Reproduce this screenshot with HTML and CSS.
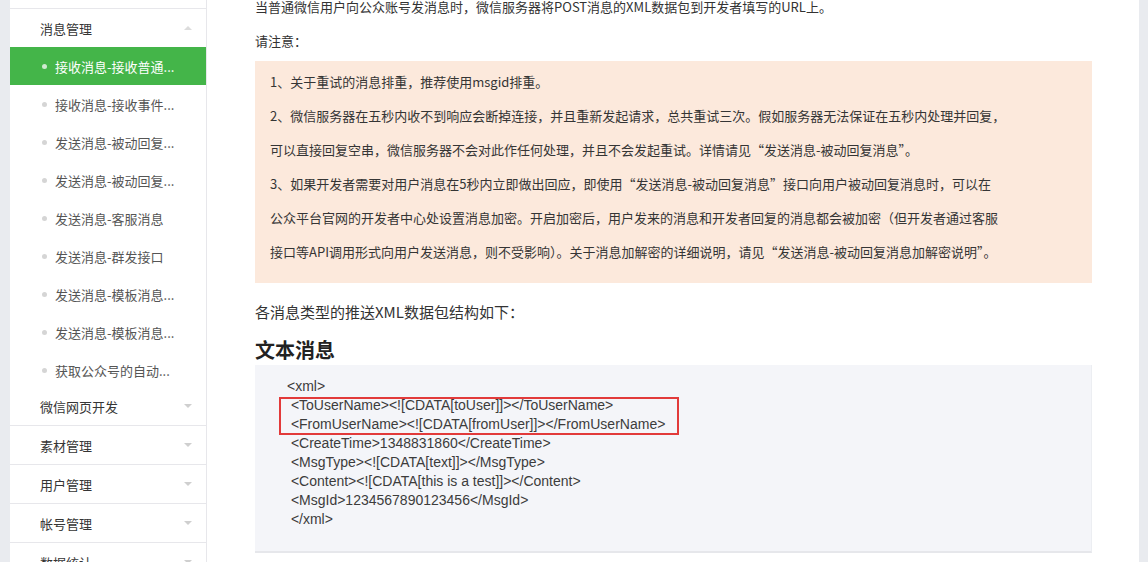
FILE: index.html
```html
<!DOCTYPE html>
<html lang="zh-CN">
<head>
<meta charset="utf-8">
<title>接收普通消息</title>
<link rel="stylesheet" href="styles.css">
</head>
<body>
<div class="page">
  <div class="gutter"></div>
  <nav class="sidebar">
    <div class="sec sec-open">
      <div class="sec-head first"><span>消息管理</span><i class="tri tri-up"></i></div>
      <ul class="sub">
        <li class="item active"><i class="dot"></i><span>接收消息-接收普通...</span></li>
        <li class="item"><i class="dot"></i><span>接收消息-接收事件...</span></li>
        <li class="item"><i class="dot"></i><span>发送消息-被动回复...</span></li>
        <li class="item"><i class="dot"></i><span>发送消息-被动回复...</span></li>
        <li class="item"><i class="dot"></i><span>发送消息-客服消息</span></li>
        <li class="item"><i class="dot"></i><span>发送消息-群发接口</span></li>
        <li class="item"><i class="dot"></i><span>发送消息-模板消息...</span></li>
        <li class="item"><i class="dot"></i><span>发送消息-模板消息...</span></li>
        <li class="item"><i class="dot"></i><span>获取公众号的自动...</span></li>
      </ul>
    </div>
    <div class="sec-head"><span>微信网页开发</span><i class="tri"></i></div>
    <div class="sec-head"><span>素材管理</span><i class="tri"></i></div>
    <div class="sec-head"><span>用户管理</span><i class="tri"></i></div>
    <div class="sec-head"><span>帐号管理</span><i class="tri"></i></div>
    <div class="sec-head"><span>数据统计</span><i class="tri"></i></div>
  </nav>
  <main class="main">
    <p class="intro">当普通微信用户向公众账号发消息时，微信服务器将POST消息的XML数据包到开发者填写的URL上。</p>
    <p class="label">请注意：</p>
    <div class="notice">
      <span class="ln">1、关于重试的消息排重，推荐使用msgid排重。</span>
      <span class="ln">2、微信服务器在五秒内收不到响应会断掉连接，并且重新发起请求，总共重试三次。假如服务器无法保证在五秒内处理并回复，</span>
      <span class="ln">可以直接回复空串，微信服务器不会对此作任何处理，并且不会发起重试。详情请见“发送消息-被动回复消息”。</span>
      <span class="ln">3、如果开发者需要对用户消息在5秒内立即做出回应，即使用“发送消息-被动回复消息”接口向用户被动回复消息时，可以在</span>
      <span class="ln">公众平台官网的开发者中心处设置消息加密。开启加密后，用户发来的消息和开发者回复的消息都会被加密（但开发者通过客服</span>
      <span class="ln">接口等API调用形式向用户发送消息，则不受影响）。关于消息加解密的详细说明，请见“发送消息-被动回复消息加解密说明”。</span>
    </div>
    <p class="lead">各消息类型的推送XML数据包结构如下：</p>
    <h3 class="title">文本消息</h3>
    <div class="code">
<pre class="code-text">&lt;xml&gt;
 &lt;ToUserName&gt;&lt;![CDATA[toUser]]&gt;&lt;/ToUserName&gt;
 &lt;FromUserName&gt;&lt;![CDATA[fromUser]]&gt;&lt;/FromUserName&gt;
 &lt;CreateTime&gt;1348831860&lt;/CreateTime&gt;
 &lt;MsgType&gt;&lt;![CDATA[text]]&gt;&lt;/MsgType&gt;
 &lt;Content&gt;&lt;![CDATA[this is a test]]&gt;&lt;/Content&gt;
 &lt;MsgId&gt;1234567890123456&lt;/MsgId&gt;
 &lt;/xml&gt;</pre>
      <div class="mark"></div>
    </div>
  </main>
  <div class="gutter gutter-right"></div>
</div>
</body>
</html>
```

FILE: styles.css
```css
* { box-sizing: border-box; }
html, body { margin: 0; padding: 0; }
body {
  width: 1148px;
  height: 562px;
  overflow: hidden;
  background: #ffffff;
  font-family: "Noto Sans CJK SC", "Liberation Sans", sans-serif;
  color: #333333;
}
.page {
  display: flex;
  height: 562px;
  overflow: hidden;
}
.gutter {
  width: 10px;
  flex: 0 0 10px;
  background: #e9ebef;
}
.gutter-right {
  width: 9px;
  flex: 0 0 9px;
}
.sidebar {
  width: 197px;
  flex: 0 0 197px;
  background: #ffffff;
  border-right: 1px solid #e7e7eb;
  padding-top: 8px;
  font-size: 13px;
  overflow: hidden;
}
.sec-head {
  display: flex;
  align-items: center;
  justify-content: space-between;
  height: 39px;
  padding: 0 14px 0 30px;
  color: #353535;
  border-bottom: 1px solid #e7e7eb;
}
.sec-open .sec-head { border-bottom: none; height: 38px; }
.sec-head.first { border-top: 1px solid #e7e7eb; height: 39px; }
.tri {
  width: 0;
  height: 0;
  border-left: 4px solid transparent;
  border-right: 4px solid transparent;
  border-top: 4px solid #cfcfcf;
}
.tri-up {
  border-top: none;
  border-bottom: 4px solid #dcdcdc;
}
.sub {
  list-style: none;
  margin: 0 0 -2px;
  padding: 0;
}
.item {
  display: flex;
  align-items: center;
  height: 38px;
  padding-left: 32px;
  color: #555555;
  white-space: nowrap;
}
.item .dot {
  width: 5px;
  height: 5px;
  border-radius: 50%;
  background: #d5d5d5;
  margin-right: 8px;
  flex: 0 0 5px;
}
.item.active {
  background: #44b549;
  color: #ffffff;
}
.item.active .dot { background: #cfe9d0; }

.main {
  flex: 1;
  background: #ffffff;
  padding: 0 47px 0 48px;
  font-size: 13px;
  overflow: hidden;
}
.intro {
  margin: -10px 0 0;
  line-height: 34px;
  white-space: nowrap;
}
.label {
  margin: 0;
  line-height: 34px;
}
.notice {
  margin-top: 3px;
  background: #fce9dc;
  padding: 4px 15px 14px;
  color: #353535;
}
.notice .ln {
  display: block;
  line-height: 34px;
  white-space: nowrap;
}
.lead {
  margin: 14px 0 0;
  font-size: 15px;
  line-height: 30px;
  color: #333333;
}
.title {
  margin: 8px 0 0;
  font-size: 20px;
  line-height: 30px;
  font-weight: bold;
  color: #222222;
}
.code {
  position: relative;
  background: #f4f5f9;
  border-bottom: 2px solid #e6e7eb;
  border-right: 1px solid #eceef2;
  height: 188px;
  padding: 12px 0 0 32px;
}
.code-text {
  margin: 0;
  font-family: "Liberation Sans", "Noto Sans CJK SC", sans-serif;
  font-size: 14px;
  line-height: 19px;
  color: #3c3c3c;
}
.mark {
  position: absolute;
  left: 24px;
  top: 32px;
  width: 400px;
  height: 38px;
  border: 2px solid #e23a3a;
}
```
